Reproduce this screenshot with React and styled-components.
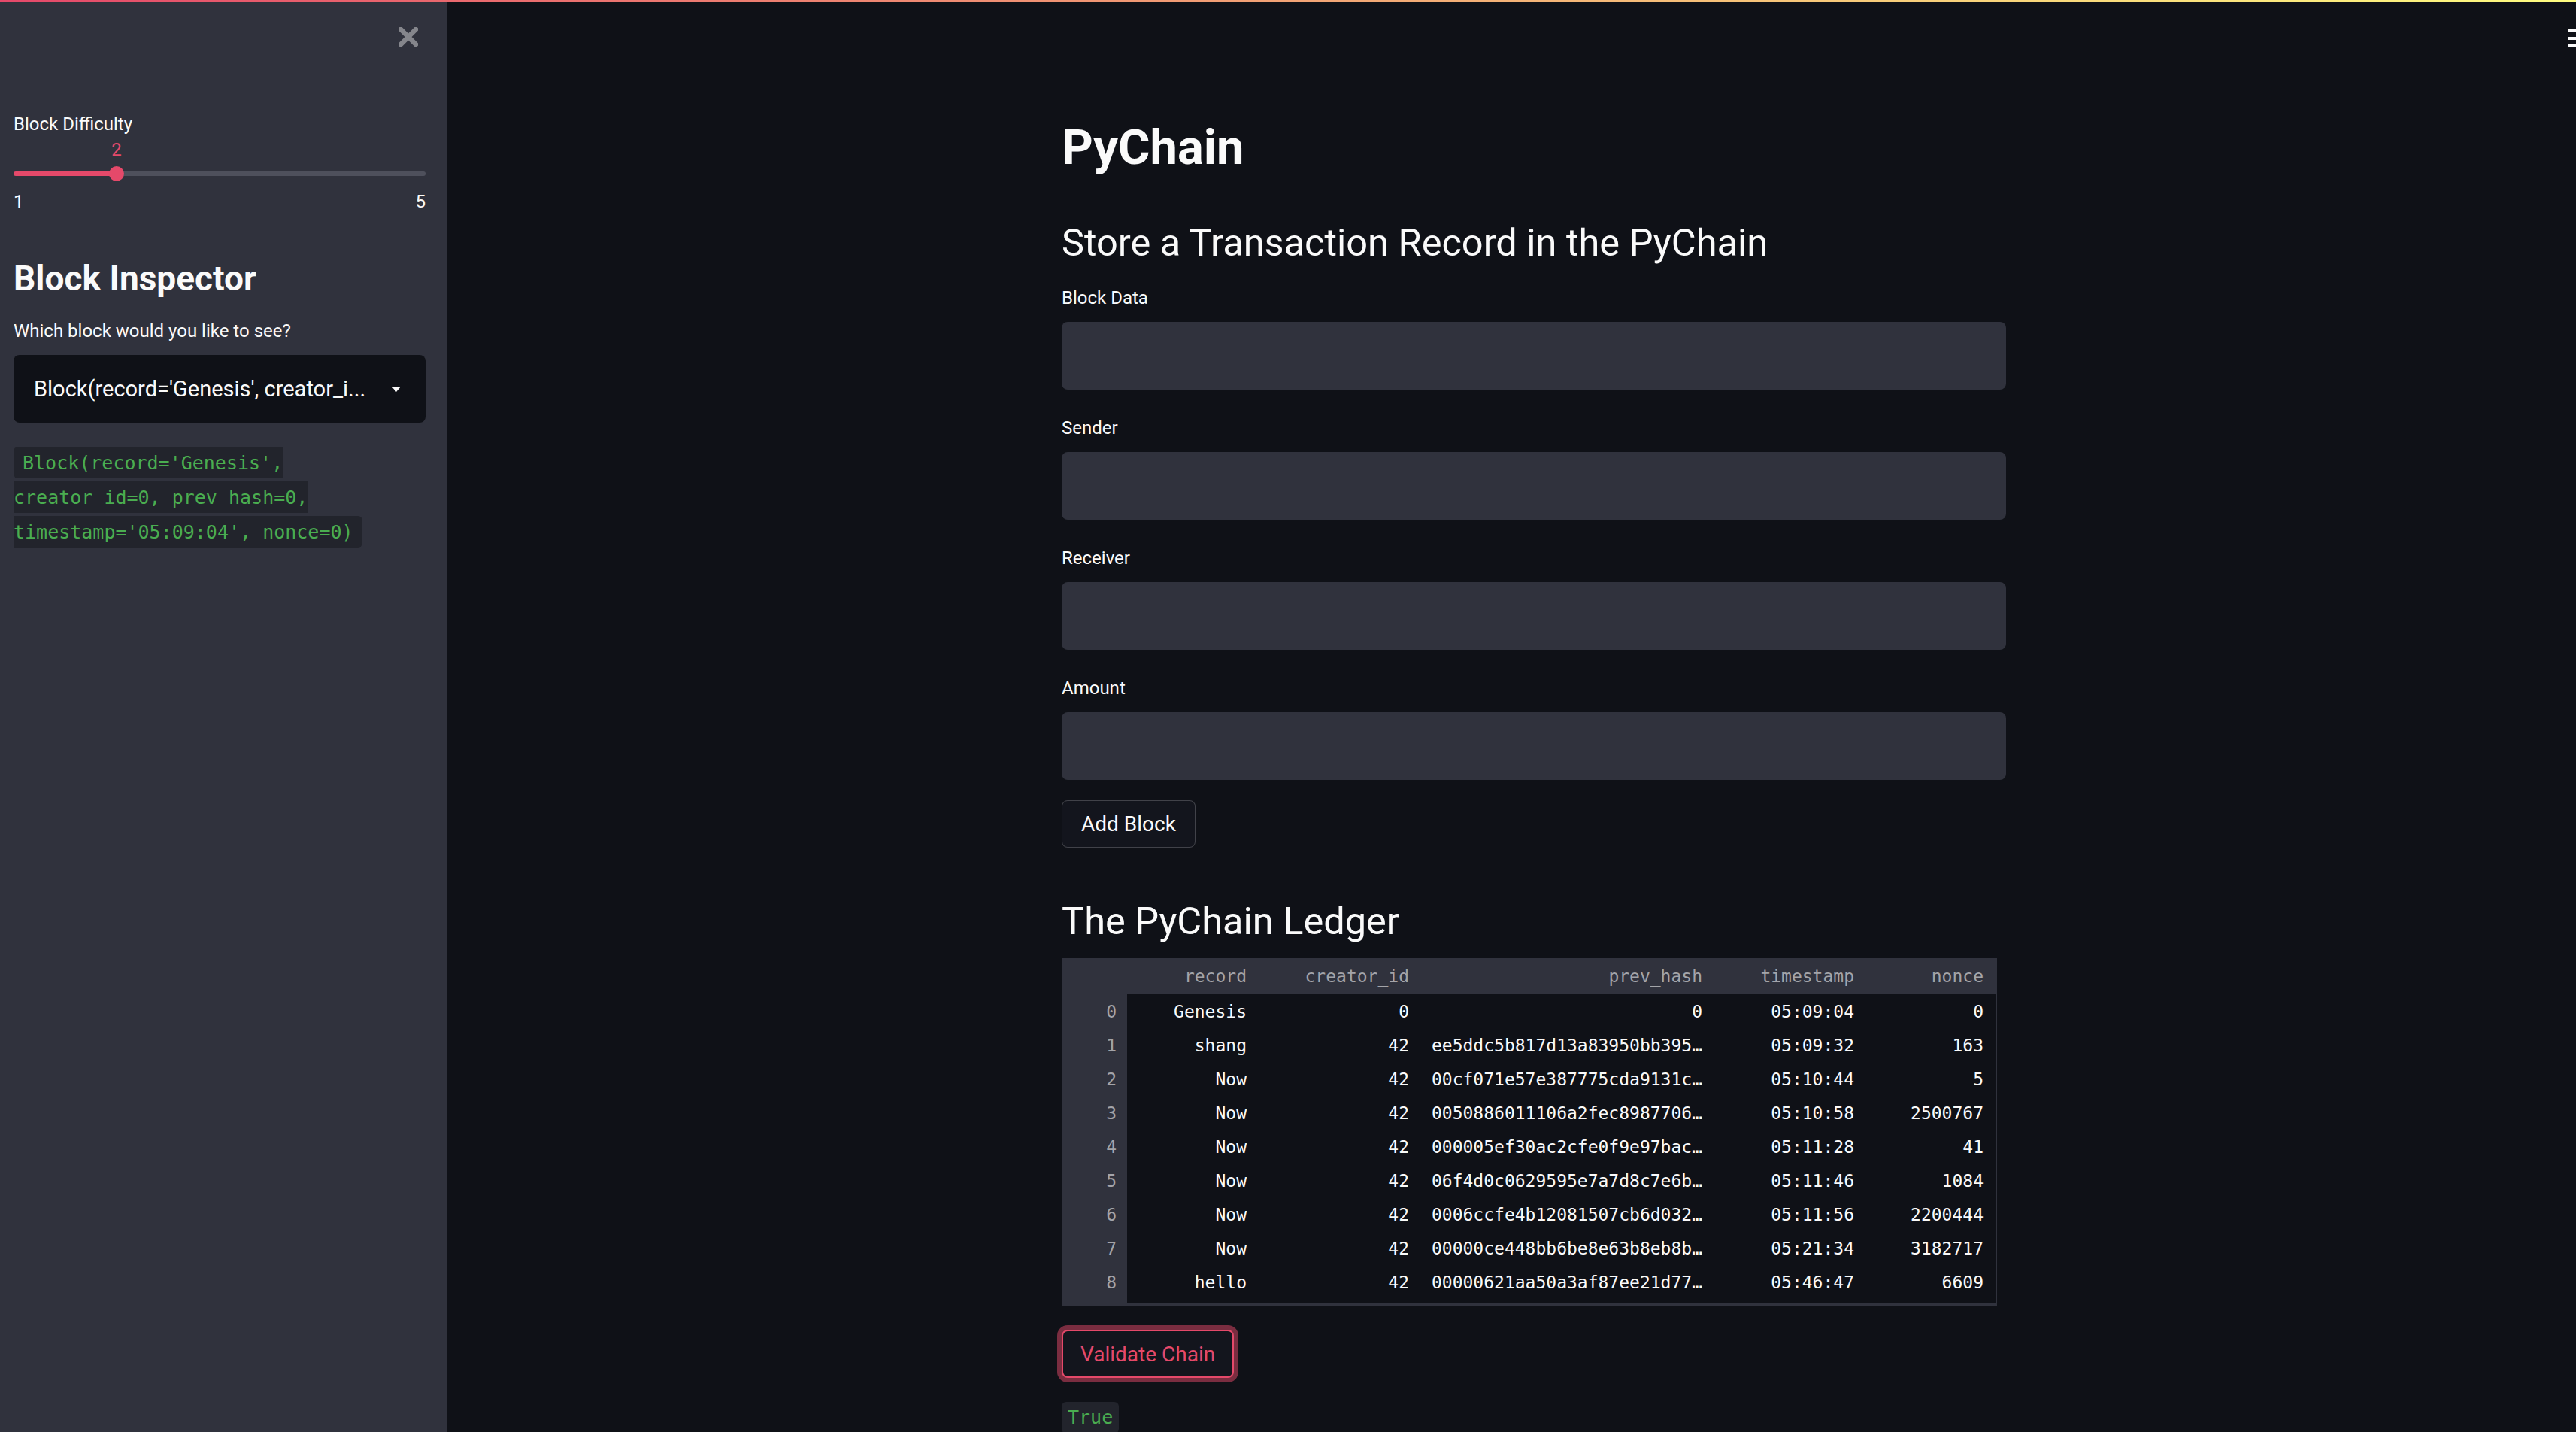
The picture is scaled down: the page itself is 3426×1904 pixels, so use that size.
import React from "react";
import styled, { createGlobalStyle } from "styled-components";

const accent = "#e5496a";
const panel = "#30323d";
const base = "#0f1117";
const codeBg = "#22242c";
const mono = `"DejaVu Sans Mono", "Liberation Mono", monospace`;

const GlobalStyle = createGlobalStyle`
  html, body {
    margin: 0;
    padding: 0;
    background: ${base};
    overflow: hidden;
  }
  body {
    font-family: Roboto, "Noto Sans", sans-serif;
    color: #fafafa;
  }
  * {
    box-sizing: border-box;
  }
`;

const Page = styled.div`
  width: 3426px;
  height: 1904px;
  display: flex;
  flex-direction: column;
  overflow: hidden;
  background: ${base};
`;

const Decoration = styled.div`
  flex: none;
  height: 3px;
  background: linear-gradient(90deg, ${accent}, #fffd80);
`;

const Body = styled.div`
  flex: 1;
  display: flex;
  min-height: 0;
`;

const Sidebar = styled.aside`
  flex: none;
  width: 594px;
  background: ${panel};
  padding: 24px 28px 0 18px;
  display: flex;
  flex-direction: column;
`;

const CloseRow = styled.div`
  display: flex;
  justify-content: flex-end;
  align-items: center;
  height: 43px;
  padding-right: 10px;
  svg {
    display: block;
  }
`;

const WidgetLabel = styled.div`
  font-size: 24px;
  line-height: 36px;
  margin-top: ${(p) => p.$top || 0}px;
`;

const ValueRow = styled.div`
  position: relative;
  height: 30px;
  margin-top: 1px;
`;

const ValueTag = styled.span`
  position: absolute;
  top: 0;
  transform: translateX(-50%);
  font-size: 24px;
  line-height: 30px;
  color: ${accent};
`;

const TrackArea = styled.div`
  position: relative;
  height: 20px;
  margin-top: 7px;
  display: flex;
  align-items: center;
`;

const Track = styled.div`
  width: 100%;
  height: 6px;
  border-radius: 3px;
`;

const Thumb = styled.div`
  position: absolute;
  top: 0;
  width: 20px;
  height: 20px;
  border-radius: 50%;
  background: ${accent};
  transform: translateX(-50%);
`;

const Ticks = styled.div`
  display: flex;
  justify-content: space-between;
  margin-top: 9px;
  font-size: 24px;
  line-height: 36px;
`;

const SideTitle = styled.h2`
  margin: 58px 0 0;
  font-size: 46px;
  line-height: 53px;
  font-weight: 700;
`;

const Select = styled.div`
  margin-top: 14px;
  height: 90px;
  border-radius: 8px;
  background: ${base};
  display: flex;
  align-items: center;
  justify-content: space-between;
  padding: 0 33px 0 27px;
  font-size: 29px;
  white-space: nowrap;
  overflow: hidden;
`;

const CodeText = styled.p`
  margin: 30px 0 0;
  font-family: ${mono};
  font-size: 25px;
  line-height: 46px;
`;

const InlineCode = styled.code`
  font-family: ${mono};
  background: ${codeBg};
  color: #4aad50;
  padding: 6.5px 12px;
  border-radius: 6px;
`;

const Main = styled.main`
  position: relative;
  flex: 1;
  padding: 154px 0 0 60px;
`;

const MenuButton = styled.div`
  position: absolute;
  top: 36px;
  right: -10px;
  width: 20px;
  display: flex;
  flex-direction: column;
  gap: 6px;
`;

const MenuBar = styled.span`
  display: block;
  height: 4px;
  background: #fafafa;
`;

const Block = styled.div`
  width: 1256px;
  margin: 0 auto;
  display: flex;
  flex-direction: column;
  align-items: flex-start;
`;

const Title = styled.h1`
  margin: 0;
  font-size: 65px;
  line-height: 78px;
  font-weight: 700;
`;

const Subheader = styled.h3`
  margin: ${(p) => p.$top}px 0 0;
  font-size: 50.5px;
  line-height: 60px;
  font-weight: 400;
`;

const Field = styled.div`
  width: 100%;
  margin-top: ${(p) => p.$top}px;
  display: flex;
  flex-direction: column;
`;

const TextInput = styled.div`
  margin-top: 14px;
  height: 90px;
  border-radius: 8px;
  background: ${panel};
`;

const Button = styled.button`
  margin-top: ${(p) => p.$top}px;
  height: ${(p) => (p.$focused ? 64 : 63)}px;
  padding: 0 ${(p) => (p.$focused ? 23 : 25)}px;
  font-family: Roboto, "Noto Sans", sans-serif;
  font-size: 28px;
  background: #13151d;
  color: ${(p) => (p.$focused ? accent : "#fafafa")};
  border: ${(p) =>
    p.$focused ? `2px solid ${accent}` : "1px solid rgba(250, 250, 250, 0.2)"};
  border-radius: 8px;
  box-shadow: ${(p) =>
    p.$focused ? "0 0 0 6px rgba(229, 73, 106, 0.5)" : "none"};
`;

const TableWrap = styled.div`
  margin-top: 19px;
  width: 1244px;
  background: linear-gradient(to right, ${panel} 87px, ${base} 87px);
  padding-bottom: 6px;
  border-right: 2px solid ${panel};
  border-bottom: 4px solid ${panel};
`;

const Table = styled.table`
  width: 1242px;
  table-layout: fixed;
  border-collapse: collapse;
  font-family: ${mono};
  font-size: 23px;
`;

const HeadCell = styled.th`
  height: 48px;
  padding: 0 16px 0 0;
  background: ${panel};
  color: #a3a4a9;
  font-weight: 400;
  text-align: right;
  white-space: nowrap;
`;

const Cell = styled.td`
  height: 45px;
  padding: 0 ${(p) => (p.$index ? 14 : 16)}px 0 0;
  text-align: right;
  white-space: nowrap;
  overflow: hidden;
  color: ${(p) => (p.$index ? "#a3a4a9" : "#fafafa")};
  background: ${(p) => (p.$index ? panel : "transparent")};
`;

const ResultCode = styled.code`
  margin-top: 32px;
  font-family: ${mono};
  font-size: 25px;
  line-height: 42px;
  padding: 0 8px;
  border-radius: 6px;
  background: ${codeBg};
  color: #4aad50;
`;

const columns = [
  { key: "idx", label: "", width: 87 },
  { key: "record", label: "record", width: 175 },
  { key: "creator", label: "creator_id", width: 216 },
  { key: "hash", label: "prev_hash", width: 390 },
  { key: "time", label: "timestamp", width: 202 },
  { key: "nonce", label: "nonce", width: 172 },
];

const rows = [
  ["Genesis", "0", "0", "05:09:04", "0"],
  ["shang", "42", "ee5ddc5b817d13a83950bb395…", "05:09:32", "163"],
  ["Now", "42", "00cf071e57e387775cda9131c…", "05:10:44", "5"],
  ["Now", "42", "0050886011106a2fec8987706…", "05:10:58", "2500767"],
  ["Now", "42", "000005ef30ac2cfe0f9e97bac…", "05:11:28", "41"],
  ["Now", "42", "06f4d0c0629595e7a7d8c7e6b…", "05:11:46", "1084"],
  ["Now", "42", "0006ccfe4b12081507cb6d032…", "05:11:56", "2200444"],
  ["Now", "42", "00000ce448bb6be8e63b8eb8b…", "05:21:34", "3182717"],
  ["hello", "42", "00000621aa50a3af87ee21d77…", "05:46:47", "6609"],
];

const fields = ["Block Data", "Sender", "Receiver", "Amount"];

const Slider = ({ min, max, value }) => {
  const pct = ((value - min) / (max - min)) * 100;
  return (
    <>
      <ValueRow>
        <ValueTag style={{ left: `${pct}%` }}>{value}</ValueTag>
      </ValueRow>
      <TrackArea>
        <Track
          style={{
            background: `linear-gradient(to right, ${accent} ${pct}%, #4e505c ${pct}%)`,
          }}
        />
        <Thumb style={{ left: `${pct}%` }} />
      </TrackArea>
      <Ticks>
        <span>{min}</span>
        <span>{max}</span>
      </Ticks>
    </>
  );
};

const App = () => {
  return (
    <Page>
      <GlobalStyle />
      <Decoration />
      <Body>
        <Sidebar>
          <CloseRow>
            <svg width="26" height="26" viewBox="0 0 26 26">
              <path
                d="M3 3L23 23M23 3L3 23"
                stroke="#85868c"
                strokeWidth="6.5"
                strokeLinecap="square"
              />
            </svg>
          </CloseRow>
          <WidgetLabel $top={77}>Block Difficulty</WidgetLabel>
          <Slider min={1} max={5} value={2} />
          <SideTitle>Block Inspector</SideTitle>
          <WidgetLabel $top={25}>Which block would you like to see?</WidgetLabel>
          <Select>
            <span>Block(record='Genesis', creator_i...</span>
            <svg width="12" height="7" viewBox="0 0 12 7">
              <path d="M0 0h12L6 7z" fill="#fafafa" />
            </svg>
          </Select>
          <CodeText>
            <InlineCode>
              Block(record='Genesis', creator_id=0, prev_hash=0,
              timestamp='05:09:04', nonce=0)
            </InlineCode>
          </CodeText>
        </Sidebar>
        <Main>
          <MenuButton>
            <MenuBar />
            <MenuBar />
            <MenuBar />
          </MenuButton>
          <Block>
            <Title>PyChain</Title>
            <Subheader $top={58}>Store a Transaction Record in the PyChain</Subheader>
            {fields.map((f, i) => (
              <Field key={f} $top={i === 0 ? 25 : 33}>
                <WidgetLabel>{f}</WidgetLabel>
                <TextInput />
              </Field>
            ))}
            <Button $top={27}>Add Block</Button>
            <Subheader $top={68}>The PyChain Ledger</Subheader>
            <TableWrap>
              <Table>
                <colgroup>
                  {columns.map((c) => (
                    <col key={c.key} style={{ width: c.width }} />
                  ))}
                </colgroup>
                <thead>
                  <tr>
                    {columns.map((c) => (
                      <HeadCell key={c.key}>{c.label}</HeadCell>
                    ))}
                  </tr>
                </thead>
                <tbody>
                  {rows.map((r, i) => (
                    <tr key={i}>
                      <Cell $index>{i}</Cell>
                      {r.map((v, j) => (
                        <Cell key={j}>{v}</Cell>
                      ))}
                    </tr>
                  ))}
                </tbody>
              </Table>
            </TableWrap>
            <Button $top={31} $focused>
              Validate Chain
            </Button>
            <ResultCode>True</ResultCode>
          </Block>
        </Main>
      </Body>
    </Page>
  );
};

export default App;
